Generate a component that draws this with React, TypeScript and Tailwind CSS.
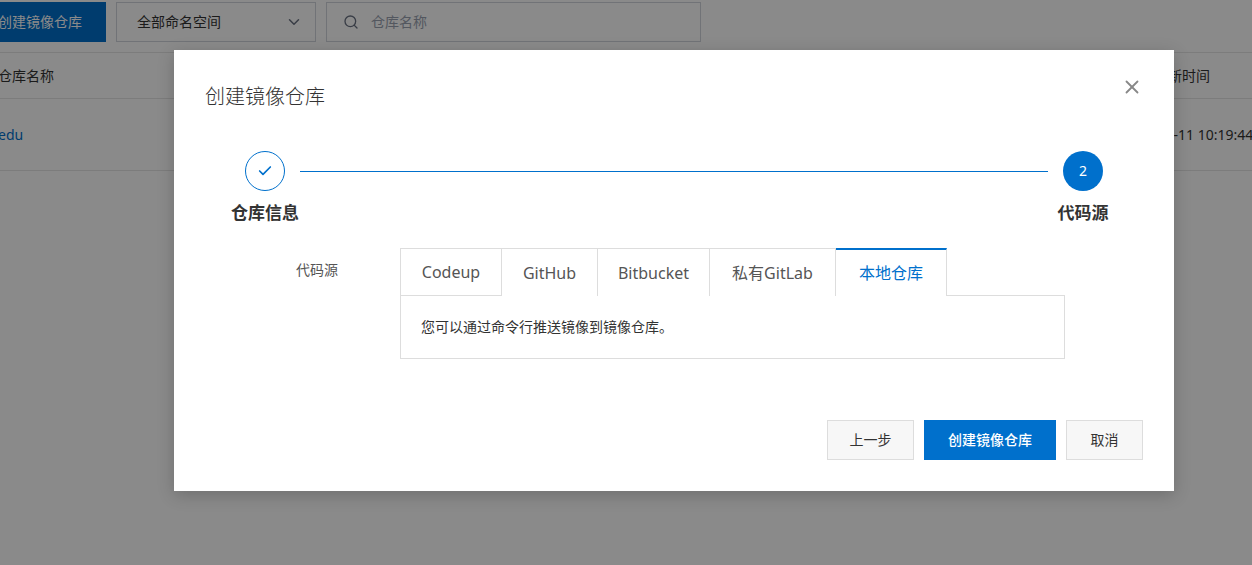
import React from 'react';
import { ChevronDown, Search, X, Check } from 'lucide-react';

const font = { fontFamily: '"Noto Sans", "Noto Sans CJK SC", sans-serif' };

const tabs = [
  { label: 'Codeup', w: 'w-[102px]' },
  { label: 'GitHub', w: 'w-[96px]' },
  { label: 'Bitbucket', w: 'w-[112px]' },
  { label: '私有GitLab', w: 'w-[126px]' },
];

const BackgroundPage: React.FC = () => (
  <div className="-ml-[26px] w-[1300px] h-[565px] bg-white">
    {/* toolbar */}
    <div className="flex items-center gap-[10px] pt-[2px] h-[42px]">
      <button className="h-[40px] px-6 bg-[#0070cc] text-white text-sm">创建镜像仓库</button>
      <div className="h-[40px] w-[200px] border border-gray-300 flex items-center justify-between pl-5 pr-3 text-sm text-[#333]">
        <span>全部命名空间</span>
        <ChevronDown size={18} className="text-gray-500" />
      </div>
      <div className="h-[40px] w-[375px] border border-gray-300 flex items-center gap-3 px-4 text-sm text-gray-400">
        <Search size={16} className="text-gray-500" />
        <span>仓库名称</span>
      </div>
    </div>
    {/* table */}
    <div className="mt-[10px] border-t border-[#e6e6e6]">
      <div className="flex items-center h-[46px] border-b border-[#e6e6e6] text-sm text-[#333]">
        <div className="pl-6 w-[1180px]">仓库名称</div>
        <div>更新时间</div>
      </div>
      <div className="flex items-center h-[72px] border-b border-[#e6e6e6] text-sm">
        <div className="pl-6 w-[1147px] text-[#0070cc]">edu</div>
        <div className="text-[#333]">2021-03-11 10:19:44</div>
      </div>
    </div>
  </div>
);

export default function App() {
  return (
    <div className="relative w-[1252px] h-[565px] overflow-hidden" style={font}>
      <BackgroundPage />
      <div className="absolute inset-0 bg-black/[0.46]" />

      {/* modal */}
      <div className="absolute left-[174px] top-[50px] w-[1000px] h-[441px] bg-white shadow-[0_4px_16px_rgba(0,0,0,0.2)] flex flex-col pt-[33px] px-[31px] pb-[31px]">
        <button className="absolute top-[26px] right-[31px] text-[#888]">
          <X size={22} strokeWidth={2} />
        </button>
        <h2 className="text-[20px] leading-[28px] text-[#333] font-light">创建镜像仓库</h2>

        {/* steps */}
        <div className="mt-[40px] flex items-start pl-[28px] pr-[36px]">
          <div className="w-[64px] flex flex-col items-center">
            <div className="w-[40px] h-[40px] rounded-full border border-[#0070cc] flex items-center justify-center text-[#0070cc]">
              <Check size={16} strokeWidth={2.5} />
            </div>
            <div className="mt-[10px] text-[17px] leading-[24px] font-bold text-[#333] whitespace-nowrap">仓库信息</div>
          </div>
          <div className="flex-1 h-px bg-[#0070cc] mt-[20px] ml-[3px] mr-[11px]" />
          <div className="w-[48px] flex flex-col items-center">
            <div className="w-[40px] h-[40px] rounded-full bg-[#0070cc] flex items-center justify-center text-white text-sm">2</div>
            <div className="mt-[10px] text-[17px] leading-[24px] font-bold text-[#333] whitespace-nowrap">代码源</div>
          </div>
        </div>

        {/* form row */}
        <div className="mt-[23px] flex">
          <div className="w-[195px] pl-[91px] pt-[12px] text-sm leading-[20px] text-[#555]">代码源</div>
          <div className="w-[665px]">
            <div className="flex h-[48px]">
              {tabs.map((t, i) => (
                <div
                  key={t.label}
                  className={`${t.w} flex items-center justify-center border-t border-r border-[#ddd] text-base text-[#555] ${i === 0 ? 'border-l border-b' : ''}`}
                >
                  {t.label}
                </div>
              ))}
              <div className="w-[111px] flex items-center justify-center border-t-2 border-t-[#0070cc] border-r border-r-[#ddd] text-base text-[#0070cc]">
                本地仓库
              </div>
              <div className="flex-1 border-b border-[#ddd]" />
            </div>
            <div className="h-[63px] border-l border-r border-b border-[#ddd] pl-5 flex items-center text-sm text-[#333]">
              您可以通过命令行推送镜像到镜像仓库。
            </div>
          </div>
        </div>

        {/* footer */}
        <div className="mt-auto flex justify-end gap-[10px]">
          <button className="w-[87px] h-[40px] bg-[#f7f7f7] border border-[#ddd] text-sm text-[#333]">上一步</button>
          <button className="w-[132px] h-[40px] bg-[#0070cc] text-sm text-white font-medium">创建镜像仓库</button>
          <button className="w-[77px] h-[40px] bg-[#f7f7f7] border border-[#ddd] text-sm text-[#333]">取消</button>
        </div>
      </div>
    </div>
  );
}
